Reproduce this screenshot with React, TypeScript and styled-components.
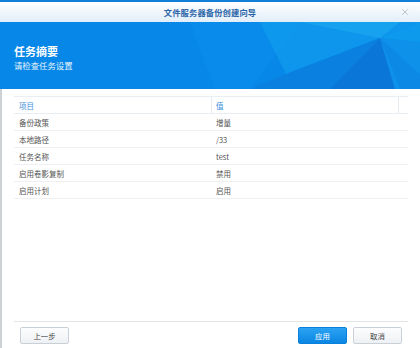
import React from 'react';
import styled, { createGlobalStyle } from 'styled-components';
import { X } from 'lucide-react';

const GlobalStyle = createGlobalStyle`
    *, *::before, *::after {
        box-sizing: border-box;
    }
    html, body {
        margin: 0;
        padding: 0;
        background: #fff;
    }
    body {
        font-family: "Noto Sans CJK SC", "Noto Sans", sans-serif;
    }
`;

const Window = styled.div`
    width: 420px;
    height: 348px;
    display: flex;
    flex-direction: column;
    background: #fff;
    overflow: hidden;
`;

const TopStripe = styled.div`
    height: 2px;
    background: #0f7fd8;
`;

const TitleBar = styled.div`
    height: 20px;
    position: relative;
    display: flex;
    align-items: center;
    justify-content: center;
    background: linear-gradient(#ffffff, #e2eef9);
    h1 {
        margin: 0;
        font-size: 8.3px;
        font-weight: 700;
        color: #2b65a8;
        letter-spacing: 0.1px;
    }
`;

const CloseButton = styled.span`
    position: absolute;
    right: 10px;
    top: 5px;
    display: flex;
    color: #9aa0a6;
`;

const Banner = styled.div`
    height: 67px;
    position: relative;
    display: flex;
    flex-direction: column;
    padding: 21px 0 0 14px;
    background: #0788e8;
    color: #fff;
    h2 {
        position: relative;
        margin: 0;
        font-size: 11px;
        font-weight: 700;
        line-height: normal;
    }
    p {
        position: relative;
        margin: 0;
        font-size: 8.4px;
        line-height: normal;
        color: #e6f3fd;
    }
`;

const BannerArt = styled.svg`
    position: absolute;
    left: 0;
    top: 0;
`;

const Content = styled.div`
    flex: 1;
    border-left: 2px solid #cfd2d5;
    padding: 7px 12px 0 12px;
`;

const Table = styled.div`
    border-top: 1px solid #e9eef3;
`;

const Row = styled.div<{ head?: boolean }>`
    display: grid;
    grid-template-columns: 197px 187px 10px;
    height: 17px;
    border-bottom: 1px solid ${({ head }) => (head ? '#e8edf2' : '#eef0f2')};
    font-size: 7.5px;
    color: ${({ head }) => (head ? '#3b8fdc' : '#555')};
    span {
        display: flex;
        align-items: center;
        padding-left: 5px;
    }
    span + span {
        border-left: 1px solid ${({ head }) => (head ? '#e6ebf0' : 'transparent')};
        padding-left: 4px;
    }
`;

const Footer = styled.div`
    border-left: 2px solid #cfd2d5;
    padding: 0 12px 4px 12px;
`;

const FooterBar = styled.div`
    border-top: 1px solid #e2e4e6;
    display: flex;
    align-items: center;
    padding: 5px 6px 0 6px;
    gap: 6px;
`;

const Spacer = styled.div`
    flex: 1;
`;

const Button = styled.button<{ primary?: boolean }>`
    width: 49px;
    height: 17px;
    padding: 0;
    border-radius: 2px;
    font-family: "Noto Sans CJK SC", "Noto Sans", sans-serif;
    font-size: 7.4px;
    border: 1px solid ${({ primary }) => (primary ? '#0b80da' : '#c9d0d7')};
    background: ${({ primary }) =>
        primary ? 'linear-gradient(#2ca3f2, #0a86e4)' : 'linear-gradient(#fdfdfe, #eef1f4)'};
    color: ${({ primary }) => (primary ? '#fff' : '#444')};
`;

const rows = [
    ['备份政策', '增量'],
    ['本地路径', '/33'],
    ['任务名称', 'test'],
    ['启用卷影复制', '禁用'],
    ['启用计划', '启用'],
];

const App = () => {
    return (
        <Window>
            <GlobalStyle />
            <TopStripe />
            <TitleBar>
                <h1>文件服务器备份创建向导</h1>
                <CloseButton>
                    <X size={10} strokeWidth={1.4} />
                </CloseButton>
            </TitleBar>
            <Banner>
                <BannerArt width="420" height="67" viewBox="0 0 420 67">
                    <polygon points="190,0 300,0 250,67 215,67" fill="#0a8eeb" opacity="0.5" />
                    <polygon points="260,0 420,0 380,16 286,52" fill="#109cee" opacity="0.7" />
                    <polygon points="300,0 400,0 380,16" fill="#1eaaf2" opacity="0.6" />
                    <polygon points="380,16 420,0 420,20" fill="#0d9aed" />
                    <polygon points="286,52 380,16 330,67 250,67" fill="#0a80e0" />
                    <polygon points="380,16 330,67 395,67" fill="#0a76d8" />
                    <polygon points="380,16 420,20 420,67 395,67" fill="#0e92e9" />
                    <polygon points="380,16 420,52 420,67 400,67" fill="#0a86e2" opacity="0.7" />
                </BannerArt>
                <h2>任务摘要</h2>
                <p>请检查任务设置</p>
            </Banner>
            <Content>
                <Table>
                    <Row head>
                        <span>项目</span>
                        <span>值</span>
                        <span />
                    </Row>
                    {rows.map(([name, value]) => (
                        <Row key={name}>
                            <span>{name}</span>
                            <span>{value}</span>
                            <span />
                        </Row>
                    ))}
                </Table>
            </Content>
            <Footer>
                <FooterBar>
                    <Button>上一步</Button>
                    <Spacer />
                    <Button primary>应用</Button>
                    <Button>取消</Button>
                </FooterBar>
            </Footer>
        </Window>
    );
};

export default App;
